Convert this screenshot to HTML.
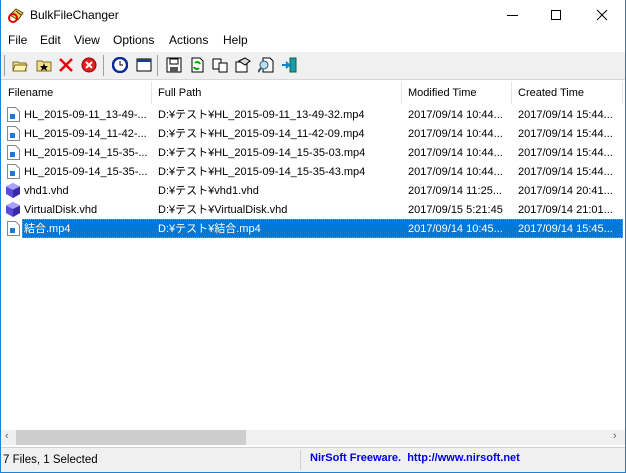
<!DOCTYPE html>
<html><head><meta charset="utf-8"><style>
*{margin:0;padding:0;box-sizing:border-box}
body{width:626px;height:473px;overflow:hidden;background:#fff;font-family:"Liberation Sans","Noto Sans CJK JP",sans-serif;font-size:11px;color:#000;position:relative}
.abs{position:absolute}
.win{position:absolute;left:0;top:0;width:626px;height:473px;border-left:1px solid #1a83d8;border-right:1px solid #1a83d8;border-bottom:1px solid #1a83d8}
.menu span{position:absolute;top:33px;font-size:12px}
.tb{left:1px;top:52px;width:624px;height:28px;background:#f0f0f0;border-bottom:1px solid #d6d6d6}
.ic{position:absolute;top:57px;width:16px;height:16px}
.hdr{left:1px;top:81px;width:622px;height:24px;background:#fff}
.hdr span{position:absolute;top:5px;line-height:14px}
.vs{position:absolute;top:82px;width:1px;height:22px;background:#e5e5e5}
.row{position:absolute;left:1px;width:622px;height:19px}
.row span{position:absolute;top:4px;white-space:nowrap;line-height:13px;height:13px}
.fi{position:absolute;left:6px;top:2px;width:13px;height:15px}
.sel{background:#0078d7;color:#fff}
</style></head><body>
<div class="win"></div>
<svg class="abs" style="left:7px;top:6px" width="18" height="18" viewBox="0 0 18 18"><path d="M3 9 L9 3 L16 7 L11 14 Z" fill="#f2d34a" stroke="#5a4a00"/><circle cx="6" cy="12" r="4" fill="none" stroke="#d00" stroke-width="2"/><path d="M9 5 L14 9" stroke="#333"/></svg>
<div class="abs" style="left:30px;top:8px;font-size:12px">BulkFileChanger</div>
<div class="abs" style="left:507px;top:15px;width:11px;height:1px;background:#000"></div>
<div class="abs" style="left:551px;top:10px;width:10px;height:10px;border:1px solid #000"></div>
<svg class="abs" style="left:596px;top:9px" width="12" height="12"><path d="M1 1L11 11M11 1L1 11" stroke="#000"/></svg>
<div class="menu"><span style="left:8px">File</span><span style="left:40px">Edit</span><span style="left:74px">View</span><span style="left:113px">Options</span><span style="left:169px">Actions</span><span style="left:223px">Help</span></div>
<div class="abs tb"></div>
<div class="abs" style="left:4px;top:55px;width:1px;height:21px;background:#a0a0a0"></div>
<div class="abs" style="left:103px;top:55px;width:1px;height:21px;background:#a0a0a0"></div>
<div class="abs" style="left:157px;top:55px;width:1px;height:21px;background:#a0a0a0"></div>
<svg class="ic" style="left:12px" viewBox="0 0 16 16"><path d="M1 5h5l1 1h7v8H1z" fill="#f4e08a" stroke="#806a20"/><path d="M3 8h12l-2 6H1z" fill="#fff3b0" stroke="#806a20"/></svg>
<svg class="ic" style="left:36px" viewBox="0 0 16 16"><path d="M1 4h5l1 1h8v9H1z" fill="#f4e08a" stroke="#806a20"/><path d="M8 6l1 3h3l-2 2 1 3-3-2-3 2 1-3-2-2h3z" fill="#000"/></svg>
<svg class="ic" style="left:58px" viewBox="0 0 16 16"><path d="M2 2L14 14M14 2L2 14" stroke="#e00" stroke-width="2.5"/></svg>
<svg class="ic" style="left:81px" viewBox="0 0 16 16"><circle cx="8" cy="8" r="7" fill="#e02020" stroke="#900"/><path d="M5 5L11 11M11 5L5 11" stroke="#fff" stroke-width="2"/></svg>
<svg class="ic" style="left:112px" viewBox="0 0 16 16"><circle cx="8" cy="8" r="7" fill="#fff" stroke="#0a2a9a" stroke-width="2.5"/><path d="M8 4v4h3" stroke="#000" fill="none"/></svg>
<svg class="ic" style="left:136px" viewBox="0 0 16 16"><rect x="1" y="2" width="14" height="12" fill="#fff" stroke="#000"/><rect x="1" y="2" width="14" height="3" fill="#1a3a9a"/></svg>
<svg class="ic" style="left:166px" viewBox="0 0 16 16"><rect x="1" y="1" width="14" height="14" fill="#fff" stroke="#000"/><rect x="4" y="2" width="8" height="5" fill="#fff" stroke="#000"/><rect x="4" y="10" width="8" height="5" fill="#555"/></svg>
<svg class="ic" style="left:189px" viewBox="0 0 16 16"><path d="M3 1h8l3 3v11H3z" fill="#fff" stroke="#000"/><path d="M6 6a3 3 0 0 1 5 1M10 11a3 3 0 0 1-5-1" stroke="#0a0" stroke-width="2" fill="none"/></svg>
<svg class="ic" style="left:212px" viewBox="0 0 16 16"><rect x="1" y="2" width="8" height="10" fill="#fff" stroke="#000"/><rect x="7" y="6" width="8" height="9" fill="#fff" stroke="#000"/></svg>
<svg class="ic" style="left:235px" viewBox="0 0 16 16"><rect x="1" y="5" width="11" height="10" fill="#fff" stroke="#000"/><path d="M4 4l6-3 5 3-5 4z" fill="#ddd" stroke="#000"/></svg>
<svg class="ic" style="left:258px" viewBox="0 0 16 16"><path d="M5 1h7l3 3v11H5z" fill="#fff" stroke="#000"/><circle cx="6" cy="8" r="4" fill="#bde" stroke="#357"/><path d="M3 11L0 15" stroke="#357" stroke-width="2"/></svg>
<svg class="ic" style="left:281px" viewBox="0 0 16 16"><rect x="9" y="1" width="6" height="14" fill="#1a9ab0" stroke="#064"/><path d="M1 8h7M5 5l3 3-3 3" stroke="#08c" stroke-width="2" fill="none"/></svg>
<div class="abs hdr"><span style="left:7px">Filename</span><span style="left:157px">Full Path</span><span style="left:407px">Modified Time</span><span style="left:517px">Created Time</span></div>
<div class="vs" style="left:151px"></div><div class="vs" style="left:401px"></div><div class="vs" style="left:511px"></div><div class="vs" style="left:622px"></div>
<div class="row" style="top:105px"><svg class="fi" viewBox="0 0 13 15"><path d="M.5.5h8l4 4v10H.5z" fill="#fff" stroke="#888"/><rect x="3" y="7" width="5" height="5" fill="#1a7ad4"/></svg><span style="left:23px">HL_2015-09-11_13-49-...</span><span style="left:157px">D:¥テスト¥HL_2015-09-11_13-49-32.mp4</span><span style="left:407px">2017/09/14 10:44...</span><span style="left:517px">2017/09/14 15:44...</span></div>
<div class="row" style="top:124px"><svg class="fi" viewBox="0 0 13 15"><path d="M.5.5h8l4 4v10H.5z" fill="#fff" stroke="#888"/><rect x="3" y="7" width="5" height="5" fill="#1a7ad4"/></svg><span style="left:23px">HL_2015-09-14_11-42-...</span><span style="left:157px">D:¥テスト¥HL_2015-09-14_11-42-09.mp4</span><span style="left:407px">2017/09/14 10:44...</span><span style="left:517px">2017/09/14 15:44...</span></div>
<div class="row" style="top:143px"><svg class="fi" viewBox="0 0 13 15"><path d="M.5.5h8l4 4v10H.5z" fill="#fff" stroke="#888"/><rect x="3" y="7" width="5" height="5" fill="#1a7ad4"/></svg><span style="left:23px">HL_2015-09-14_15-35-...</span><span style="left:157px">D:¥テスト¥HL_2015-09-14_15-35-03.mp4</span><span style="left:407px">2017/09/14 10:44...</span><span style="left:517px">2017/09/14 15:44...</span></div>
<div class="row" style="top:162px"><svg class="fi" viewBox="0 0 13 15"><path d="M.5.5h8l4 4v10H.5z" fill="#fff" stroke="#888"/><rect x="3" y="7" width="5" height="5" fill="#1a7ad4"/></svg><span style="left:23px">HL_2015-09-14_15-35-...</span><span style="left:157px">D:¥テスト¥HL_2015-09-14_15-35-43.mp4</span><span style="left:407px">2017/09/14 10:44...</span><span style="left:517px">2017/09/14 15:44...</span></div>
<div class="row" style="top:181px"><svg class="fi" style="left:4px;width:16px" viewBox="0 0 16 15"><path d="M8 0L15 3.5V11L8 15L1 11V3.5Z" fill="#5a4ad8"/><path d="M1 3.5L8 7L15 3.5L8 0Z" fill="#a9a0ff"/><path d="M8 7V15L15 11V3.5Z" fill="#3a2aa8"/></svg><span style="left:23px">vhd1.vhd</span><span style="left:157px">D:¥テスト¥vhd1.vhd</span><span style="left:407px">2017/09/14 11:25...</span><span style="left:517px">2017/09/14 20:41...</span></div>
<div class="row" style="top:200px"><svg class="fi" style="left:4px;width:16px" viewBox="0 0 16 15"><path d="M8 0L15 3.5V11L8 15L1 11V3.5Z" fill="#5a4ad8"/><path d="M1 3.5L8 7L15 3.5L8 0Z" fill="#a9a0ff"/><path d="M8 7V15L15 11V3.5Z" fill="#3a2aa8"/></svg><span style="left:23px">VirtualDisk.vhd</span><span style="left:157px">D:¥テスト¥VirtualDisk.vhd</span><span style="left:407px">2017/09/15 5:21:45</span><span style="left:517px">2017/09/14 21:01...</span></div>
<div class="row" style="top:219px"><svg class="fi" viewBox="0 0 13 15"><path d="M.5.5h8l4 4v10H.5z" fill="#fff" stroke="#888"/><rect x="3" y="7" width="5" height="5" fill="#1a7ad4"/></svg><div class="abs sel" style="left:21px;top:0;width:601px;height:19px;border:1px dotted #999"></div><span style="left:23px;color:#fff">結合.mp4</span><span style="left:157px;color:#fff">D:¥テスト¥結合.mp4</span><span style="left:407px;color:#fff">2017/09/14 10:45...</span><span style="left:517px;color:#fff">2017/09/14 15:45...</span></div>
<div class="abs" style="left:1px;top:430px;width:624px;height:15px;background:#f0f0f0"></div>
<div class="abs" style="left:16px;top:430px;width:230px;height:15px;background:#cdcdcd"></div>
<div class="abs" style="left:5px;top:430px;font-size:11px;color:#606060">‹</div>
<div class="abs" style="left:613px;top:430px;font-size:11px;color:#606060">›</div>
<div class="abs" style="left:1px;top:447px;width:624px;height:25px;background:#f0f0f0;border-top:1px solid #d0d0d0"></div>
<div class="abs" style="left:300px;top:450px;width:1px;height:20px;background:#d0d0d0"></div>
<div class="abs" style="left:3px;top:454px;font-size:11.5px">7 Files, 1 Selected</div>
<div class="abs" style="left:310px;top:452px;font-size:11px;color:#0000e0;font-weight:bold;white-space:nowrap">NirSoft Freeware.&nbsp; http://www.nirsoft.net</div>
</body></html>
